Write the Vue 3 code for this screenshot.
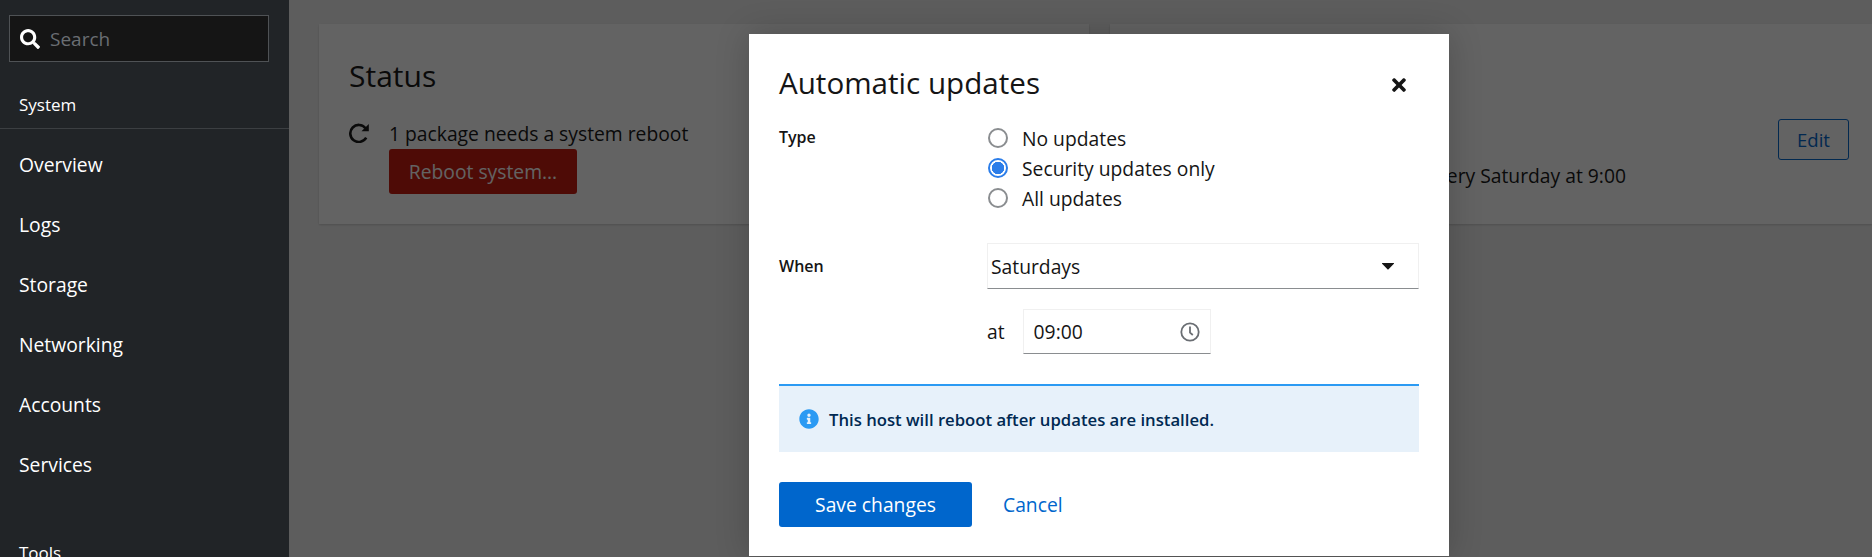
<template>
  <div class="page">
    <aside class="sidebar">
      <div class="search">
        <svg class="search-icon" viewBox="0 0 512 512">
          <path fill="currentColor" d="M505 442.7L405.3 343c-4.5-4.5-10.6-7-17-7H372c27.6-35.3 44-79.7 44-128C416 93.1 322.9 0 208 0S0 93.1 0 208s93.1 208 208 208c48.3 0 92.7-16.4 128-44v16.3c0 6.4 2.5 12.5 7 17l99.7 99.7c9.4 9.4 24.6 9.4 33.9 0l28.3-28.3c9.4-9.4 9.4-24.6.1-34zM208 336c-70.7 0-128-57.2-128-128 0-70.7 57.2-128 128-128 70.7 0 128 57.2 128 128 0 70.7-57.2 128-128 128z" />
        </svg>
        <span class="search-text">Search</span>
      </div>
      <div class="section-title">System</div>
      <nav class="nav">
        <a v-for="item in systemItems" :key="item" class="nav-item">{{ item }}</a>
      </nav>
      <div class="section-title tools">Tools</div>
    </aside>

    <main class="main">
      <div class="cards">
        <section class="card status-card">
          <h2 class="card-title">Status</h2>
          <div class="status-row">
            <svg class="redo-icon" viewBox="0 0 20 20">
              <path d="M16.5 5.2A8.5 8.5 0 1 0 17.2 14.6" fill="none" stroke="currentColor" stroke-width="2.6" />
              <path fill="currentColor" d="M12.5 8.2H19.8V1Z" />
            </svg>
            <div>
              <div class="status-text">1 package needs a system reboot</div>
              <button class="reboot-btn">Reboot system...</button>
            </div>
          </div>
        </section>
        <section class="card settings-card">
          <div class="settings-text">every Saturday at 9:00</div>
          <button class="edit-btn">Edit</button>
        </section>
      </div>

      <div class="overlay">
        <div class="dialog">
          <header class="dialog-head">
            <h1 class="dialog-title">Automatic updates</h1>
            <svg class="close-icon" viewBox="0 0 352 512">
              <path fill="currentColor" d="M242.72 256l100.07-100.07c12.28-12.28 12.28-32.19 0-44.48l-22.24-22.24c-12.28-12.28-32.19-12.28-44.48 0L176 189.28 75.93 89.21c-12.28-12.28-32.19-12.28-44.48 0L9.21 111.45c-12.28 12.28-12.28 32.19 0 44.48L109.28 256 9.21 356.07c-12.28 12.28-12.28 32.19 0 44.48l22.24 22.24c12.28 12.28 32.2 12.28 44.48 0L176 322.72l100.07 100.07c12.28 12.28 32.2 12.28 44.48 0l22.24-22.24c12.28-12.28 12.28-32.19 0-44.48L242.72 256z" />
            </svg>
          </header>

          <div class="form-row type-row">
            <div class="form-label type-label">Type</div>
            <div class="radios">
              <label v-for="opt in updateTypes" :key="opt" class="radio">
                <span class="radio-dot" :class="{ checked: opt === selectedType }"></span>
                <span>{{ opt }}</span>
              </label>
            </div>
          </div>

          <div class="form-row when-row">
            <div class="form-label when-label">When</div>
            <div class="when-fields">
              <div class="select">
                <span>Saturdays</span>
                <svg class="caret" viewBox="0 0 12 7"><path fill="currentColor" d="M0.4 0h11.2c.4 0 .6.5.3.8L6.3 6.6c-.2.2-.4.2-.6 0L.1.8C-.2.5 0 0 .4 0z" /></svg>
              </div>
              <div class="time-row">
                <span>at</span>
                <div class="time-input">
                  <span>09:00</span>
                  <svg class="clock" viewBox="0 0 20 20">
                    <circle cx="10" cy="10" r="8.7" fill="none" stroke="currentColor" stroke-width="1.8" />
                    <path d="M10 4.6V10.6L12.8 13" fill="none" stroke="currentColor" stroke-width="1.8" />
                  </svg>
                </div>
              </div>
            </div>
          </div>

          <div class="alert">
            <svg class="info-icon" viewBox="0 0 512 512">
              <path fill="currentColor" d="M256 8C119.043 8 8 119.083 8 256c0 136.997 111.043 248 248 248s248-111.003 248-248C504 119.083 392.957 8 256 8zm0 110c23.196 0 42 18.804 42 42s-18.804 42-42 42-42-18.804-42-42 18.804-42 42-42zm56 254c0 6.627-5.373 12-12 12h-88c-6.627 0-12-5.373-12-12v-24c0-6.627 5.373-12 12-12h12v-64h-12c-6.627 0-12-5.373-12-12v-24c0-6.627 5.373-12 12-12h64c6.627 0 12 5.373 12 12v100h12c6.627 0 12 5.373 12 12v24z" />
            </svg>
            <span class="alert-text">This host will reboot after updates are installed.</span>
          </div>

          <footer class="dialog-foot">
            <button class="save-btn">Save changes</button>
            <a class="cancel-link">Cancel</a>
          </footer>
        </div>
      </div>
    </main>
  </div>
</template>

<script setup>
import { ref } from "vue";

const systemItems = ["Overview", "Logs", "Storage", "Networking", "Accounts", "Services"];
const updateTypes = ["No updates", "Security updates only", "All updates"];
const selectedType = ref("Security updates only");
</script>

<style>
html,
body {
  margin: 0;
  overflow: hidden;
}
</style>

<style scoped>
.page {
  display: flex;
  width: 1872px;
  height: 557px;
  overflow: hidden;
  font-family: "Open Sans", "Liberation Sans", sans-serif;
  font-size: 19.3px;
  color: #151515;
}

.sidebar {
  flex: 0 0 289px;
  height: 557px;
  overflow: hidden;
  background: #212427;
  color: #fff;
}

.search {
  display: flex;
  align-items: center;
  box-sizing: border-box;
  width: 260px;
  height: 47px;
  margin: 15px 0 0 9px;
  padding-left: 10px;
  border: 1px solid #4f5255;
  background: #151515;
}

.search-icon {
  width: 20px;
  height: 20px;
  color: #fff;
}

.search-text {
  margin-left: 10px;
  font-size: 19px;
  color: #6a6e73;
}

.section-title {
  height: 67px;
  box-sizing: border-box;
  padding: 32px 0 0 19px;
  font-size: 17px;
  line-height: 22px;
  border-bottom: 1px solid #3c3f42;
}

.nav {
  display: flex;
  flex-direction: column;
}

.nav-item {
  height: 60px;
  padding-left: 19px;
  line-height: 71px;
  font-size: 19.3px;
  box-sizing: border-box;
}

.tools {
  border-bottom: 0;
  padding-top: 53px;
  height: 97px;
}

.main {
  position: relative;
  flex: 1;
  height: 557px;
  overflow: hidden;
  background: #f0f0f0;
}

.cards {
  display: flex;
  gap: 21px;
  padding: 24px 0 0 30px;
}

.card {
  box-sizing: border-box;
  height: 200px;
  background: #fff;
  box-shadow: 0 1px 2px rgba(3, 3, 3, 0.16);
}

.status-card {
  flex: 0 0 770px;
  padding: 30px;
}

.settings-card {
  position: relative;
  flex: 1;
}

.card-title {
  margin: 0;
  font-size: 30px;
  font-weight: 400;
  line-height: 44px;
}

.status-row {
  display: flex;
  gap: 20px;
  margin-top: 12px;
}

.redo-icon {
  flex: none;
  width: 20px;
  height: 20px;
  margin-top: 13px;
}

.status-text {
  line-height: 28px;
  margin-top: 10px;
  margin-bottom: 1px;
}

.reboot-btn {
  display: block;
  width: 188px;
  height: 45px;
  padding: 0;
  border: 0;
  border-radius: 3px;
  background: #c9190b;
  color: #fff;
  font: inherit;
}

.settings-text {
  position: absolute;
  right: 246px;
  top: 138px;
  white-space: nowrap;
  line-height: 27px;
}

.edit-btn {
  position: absolute;
  top: 95px;
  right: 23px;
  box-sizing: border-box;
  width: 71px;
  height: 41px;
  padding: 0;
  border: 1px solid #06c;
  border-radius: 3px;
  background: transparent;
  color: #06c;
  font: inherit;
  font-size: 18.5px;
}

.overlay {
  position: absolute;
  inset: 0;
  background: rgba(3, 3, 3, 0.62);
}

.dialog {
  position: absolute;
  top: 34px;
  left: 460px;
  display: flex;
  flex-direction: column;
  box-sizing: border-box;
  width: 700px;
  height: 522px;
  padding: 0 30px;
  background: #fff;
  box-shadow: 0 0 32px rgba(3, 3, 3, 0.2);
}

.dialog-head {
  display: flex;
  align-items: center;
  justify-content: space-between;
  box-sizing: border-box;
  height: 89px;
  padding: 8px 13px 0 0;
}

.dialog-title {
  margin: 0;
  font-size: 29.6px;
  font-weight: 400;
  line-height: 36px;
}

.close-icon {
  width: 14px;
  height: 20px;
  margin-top: 5px;
  color: #151515;
}

.form-row {
  display: flex;
}

.form-label {
  flex: 0 0 208px;
  font-size: 16px;
  font-weight: 600;
  line-height: 22px;
}

.type-label {
  padding-top: 3px;
}

.radios {
  display: flex;
  flex-direction: column;
  margin-left: 1px;
}

.radio {
  display: flex;
  align-items: center;
  gap: 14px;
  height: 30px;
}

.radio-dot {
  box-sizing: border-box;
  width: 20px;
  height: 20px;
  border: 2px solid #8a8d90;
  border-radius: 50%;
}

.radio-dot.checked {
  border-color: #2b7de9;
  background: radial-gradient(circle, #2b7de9 0 6px, #fff 6.5px);
}

.when-row {
  margin-top: 30px;
}

.when-label {
  padding-top: 12px;
}

.when-fields {
  flex: 1;
}

.select {
  display: flex;
  align-items: center;
  justify-content: space-between;
  box-sizing: border-box;
  height: 46px;
  padding: 0 24px 0 3px;
  border: 1px solid #f0f0f0;
  border-bottom-color: #8a8d90;
}

.caret {
  width: 12px;
  height: 7px;
  color: #151515;
}

.time-row {
  display: flex;
  align-items: center;
  gap: 18px;
  margin-top: 20px;
}

.time-input {
  display: flex;
  align-items: center;
  justify-content: space-between;
  box-sizing: border-box;
  width: 188px;
  height: 45px;
  padding: 0 10px;
  border: 1px solid #f0f0f0;
  border-bottom-color: #8a8d90;
}

.clock {
  width: 20px;
  height: 20px;
  color: #6a6e73;
}

.alert {
  display: flex;
  align-items: center;
  gap: 10px;
  box-sizing: border-box;
  height: 68px;
  margin-top: 30px;
  padding: 0 20px;
  border-top: 2px solid #2b9af3;
  background: #e7f1fa;
}

.info-icon {
  flex: none;
  width: 20px;
  height: 20px;
  color: #2b9af3;
}

.alert-text {
  font-size: 16.7px;
  font-weight: 600;
  color: #002952;
}

.dialog-foot {
  display: flex;
  align-items: center;
  gap: 31px;
  margin-top: 30px;
}

.save-btn {
  width: 193px;
  height: 45px;
  padding: 0;
  border: 0;
  border-radius: 3px;
  background: #06c;
  color: #fff;
  font: inherit;
}

.cancel-link {
  color: #06c;
}
</style>
